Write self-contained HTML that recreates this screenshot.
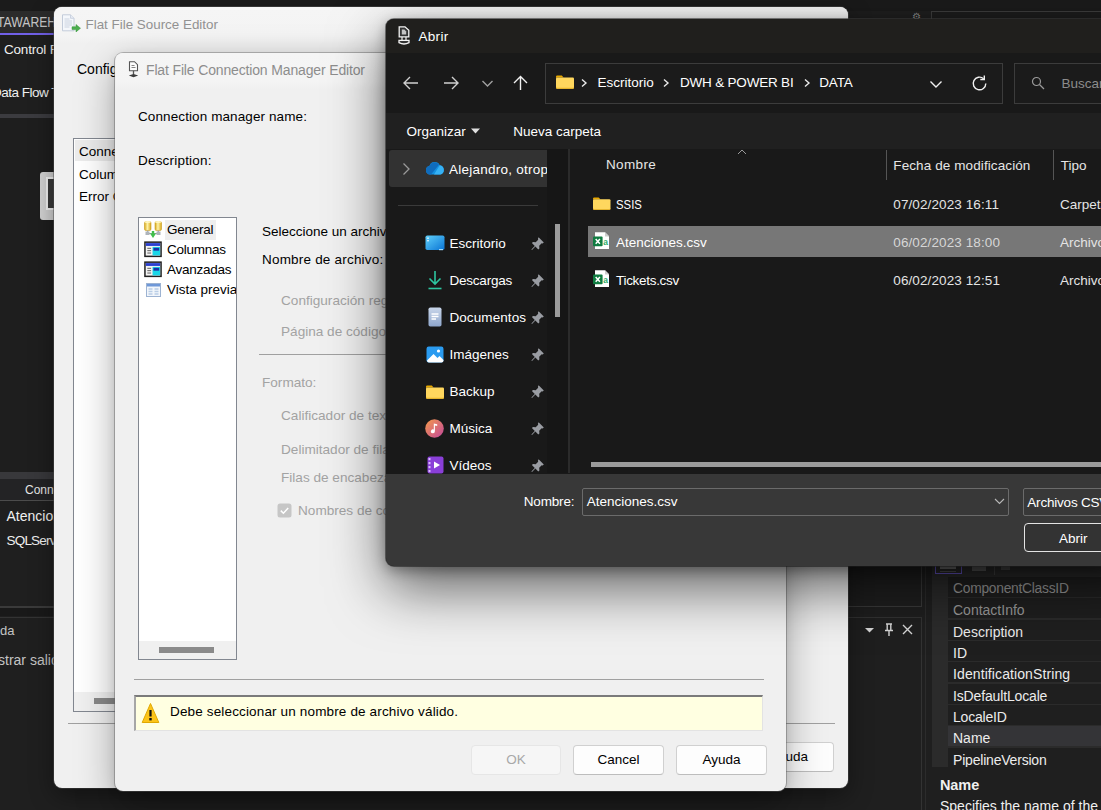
<!DOCTYPE html>
<html lang="es">
<head>
<meta charset="utf-8">
<title>Abrir</title>
<style>
*{box-sizing:border-box;margin:0;padding:0}
html,body{width:1101px;height:810px;overflow:hidden;background:#1f1f1f}
body{position:relative;font-family:"Liberation Sans",sans-serif;font-size:13px;color:#000}
.a{position:absolute;white-space:nowrap}
.t{position:absolute;white-space:nowrap;line-height:16px;height:16px}
/* ---------- VS background ---------- */
#vs{left:0;top:0;width:1101px;height:810px;background:#1f1f1f;overflow:hidden}
.w{color:#f0f0f0}
/* ---------- light dialogs ---------- */
.dlg{background:#f0f0f0;border-radius:8px;overflow:hidden}
#src{left:54px;top:7px;width:794px;height:781px;box-shadow:0 8px 24px rgba(0,0,0,.4),0 0 0 1px rgba(90,90,90,.5)}
#cm{left:115px;top:53px;width:671px;height:738px;box-shadow:0 14px 38px rgba(0,0,0,.34),0 2px 10px rgba(0,0,0,.1),0 0 0 1px rgba(120,120,120,.45)}
.g{color:#8b8b8b}
.d{color:#a3a3a3}
.btn{position:absolute;height:30px;border:1px solid #d0d0d0;border-bottom-color:#bdbdbd;border-radius:4px;background:#fdfdfd;text-align:center;line-height:28px;font-size:13.5px;color:#000}
/* ---------- Abrir dialog ---------- */
#ab{left:386px;top:19px;width:760px;height:547px;background:#191919;border-radius:8px;overflow:hidden;box-shadow:0 22px 56px rgba(0,0,0,.6),0 4px 14px rgba(0,0,0,.35),0 0 0 1px rgba(70,70,70,.6);color:#fff}
#ab .t{color:#fff}
</style>
</head>
<body>
<div id="vs" class="a">
 <!-- top strip -->
 <div class="a" style="left:0;top:0;width:1101px;height:11px;background:#1b1b1b"></div>
 <div class="a" style="left:0;top:11px;width:60px;height:22px;background:#2b2b2b"></div>
 <div class="t" style="left:-3px;top:13.500px;font-size:14.500px;color:#c6c6c6;transform:scaleX(.84);transform-origin:0 50%">TAWAREHOUSE</div>
 <div class="a" style="left:0;top:33px;width:60px;height:2px;background:#7160e8"></div>
 <div class="t w" style="left:4px;top:42px;font-size:13.500px;letter-spacing:-.2px">Control F</div>
 <div class="t w" style="left:-8px;top:85px;font-size:13.500px;letter-spacing:-.5px">Data Flow Task</div>
 <div class="a" style="left:0;top:114px;width:60px;height:4px;background:#3b3b3f"></div>
 <div class="a" style="left:0;top:118px;width:60px;height:354px;background:#1e1e1e"></div>
 <!-- node -->
 <div class="a" style="left:40px;top:172px;width:30px;height:48px;background:#d2d2d2;border-radius:3px"></div>
 <div class="a" style="left:46px;top:177px;width:30px;height:33px;background:#f4f4f4"></div>
 <div class="a" style="left:48px;top:179px;width:30px;height:29px;background:#3a3a3a"></div>
 <!-- connection managers -->
 <div class="a" style="left:0;top:472px;width:60px;height:7px;background:#38383b"></div>
 <div class="a" style="left:0;top:479px;width:60px;height:21px;background:#232325"></div>
 <div class="t" style="left:25px;top:482px;font-size:12px;color:#e6e6e6">Connection Managers</div>
 <div class="a" style="left:0;top:500px;width:60px;height:1px;background:#4c4c4c"></div>
 <div class="t w" style="left:6.500px;top:508px;font-size:14px;letter-spacing:0">Atenciones</div>
 <div class="t w" style="left:6.500px;top:533px;font-size:13.500px;letter-spacing:-.8px">SQLServer</div>
 <div class="a" style="left:0;top:606px;width:60px;height:2px;background:#3a3a3a"></div>
 <div class="a" style="left:0;top:608px;width:60px;height:8px;background:#191919"></div>
 <div class="a" style="left:0;top:617px;width:60px;height:1px;background:#333"></div>
 <div class="t" style="left:0;top:623px;font-size:13px;color:#c4c4c4">da</div>
 <div class="t" style="left:-2px;top:652px;font-size:14px;color:#c4c4c4">strar salida</div>
 <!-- right side -->
 <div class="a" style="left:912px;top:12px;font-size:10px;color:#888;line-height:10px">&#9881;</div>
 <div class="a" style="left:931px;top:11px;width:180px;height:30px;border:1px solid #3d3d3d;background:#1c1c1c"></div>
 <div class="a" style="left:840px;top:560px;width:82px;height:47px;border:1px solid #3a3a3a;border-left:0;border-top:0"></div>
 <div class="a" style="left:840px;top:617px;width:82px;height:200px;border:1px solid #333;border-left:0"></div>
 <div class="a" style="left:925px;top:560px;width:1px;height:250px;background:#2c2c2c"></div>
 <svg class="a" style="left:864px;top:622px" width="52" height="16" viewBox="0 0 52 16">
  <path d="M1 6h9l-4.5 4.5z" fill="#d8d8d8"/>
  <path d="M22 2h6M23.2 2v6M26.8 2v6M21 8.5h8M25 8.5v5.5" stroke="#d8d8d8" stroke-width="1.4" fill="none"/>
  <path d="M39 3l9 9M48 3l-9 9" stroke="#d8d8d8" stroke-width="1.4" fill="none"/>
 </svg>
 <div class="a" style="left:932px;top:560px;width:180px;height:207px;background:#2b2b2b"></div>
 <div class="a" style="left:935px;top:556px;width:27px;height:18px;border:1px solid #6a5acd"></div>
 <div class="a" style="left:940px;top:566px;width:16px;height:3px;background:#777"></div><div class="a" style="left:940px;top:571px;width:16px;height:1px;background:#555"></div><div class="a" style="left:972px;top:566px;width:14px;height:5px;background:#5a5a5a"></div><div class="a" style="left:994px;top:566px;width:1px;height:9px;background:#444"></div><div class="a" style="left:1001px;top:566px;width:9px;height:4px;background:#4a4a4a"></div>
 <div class="a" id="pg" style="left:948px;top:577px;width:160px;height:190px">
<div class="a" style="left:0;top:0px;width:160px;height:20px;background:#1f1f1f"></div><div class="t" style="left:5px;top:4px;font-size:13.800px;color:#9a9a9a;letter-spacing:-.25px">ComponentClassID</div>
<div class="a" style="left:0;top:21px;width:160px;height:20px;background:#1f1f1f"></div><div class="t" style="left:5px;top:25px;font-size:14px;color:#9a9a9a;letter-spacing:0px">ContactInfo</div>
<div class="a" style="left:0;top:43px;width:160px;height:20px;background:#1f1f1f"></div><div class="t" style="left:5px;top:47px;font-size:14px;color:#ececec;letter-spacing:0px">Description</div>
<div class="a" style="left:0;top:64px;width:160px;height:20px;background:#1f1f1f"></div><div class="t" style="left:5px;top:68px;font-size:14px;color:#ececec;letter-spacing:0px">ID</div>
<div class="a" style="left:0;top:85px;width:160px;height:20px;background:#1f1f1f"></div><div class="t" style="left:5px;top:89px;font-size:14px;color:#ececec;letter-spacing:.1px">IdentificationString</div>
<div class="a" style="left:0;top:107px;width:160px;height:20px;background:#1f1f1f"></div><div class="t" style="left:5px;top:111px;font-size:14px;color:#ececec;letter-spacing:-.15px">IsDefaultLocale</div>
<div class="a" style="left:0;top:128px;width:160px;height:20px;background:#1f1f1f"></div><div class="t" style="left:5px;top:132px;font-size:14px;color:#ececec;letter-spacing:-.2px">LocaleID</div>
<div class="a" style="left:0;top:149px;width:160px;height:20px;background:#343437"></div><div class="t" style="left:5px;top:153px;font-size:14px;color:#ececec;letter-spacing:0px">Name</div>
<div class="a" style="left:0;top:171px;width:160px;height:20px;background:#1f1f1f"></div><div class="t" style="left:5px;top:175px;font-size:14px;color:#ececec;letter-spacing:-.2px">PipelineVersion</div>
</div>
 <div class="a" style="left:932px;top:767px;width:180px;height:50px;background:#1f1f1f"></div>
 <div class="t w" style="left:940px;top:777px;font-size:14.500px;font-weight:bold;letter-spacing:-.1px">Name</div>
 <div class="t w" style="left:940px;top:797.500px;font-size:14px;letter-spacing:0">Specifies the name of the object.</div>
</div>
<div id="src" class="a dlg">
 <div class="a" style="left:0;top:0;width:794px;height:36px;background:linear-gradient(#f5f5f5 0,#f4f4f4 80%,#f0f0f0 100%)"></div>
 <svg class="a" style="left:7px;top:7px" width="20" height="20" viewBox="0 0 20 20">
  <path d="M1.500 .8h8l3.500 3.500v12.500h-11.500z" fill="#f4f7fb" stroke="#c3ccda" stroke-width="1"/>
  <path d="M9.500 .8v3.500h3.500" fill="#e6ebf3" stroke="#c3ccda" stroke-width=".8"/>
  <path d="M3.500 5h5M3.500 7h7.500M3.500 9h7.500M3.500 11h7.500M3.500 13h5" stroke="#cbd3e0" stroke-width="1"/>
  <path d="M11 12.800h4v-2.300l4.500 3.700-4.500 3.700v-2.300h-4z" fill="#4cae4f" stroke="#3a943f" stroke-width=".5"/>
 </svg>
 <div class="t" style="left:31.500px;top:10px;font-size:13.400px;color:#929292">Flat File Source Editor</div>
 <div class="t" style="left:23px;top:54px;font-size:14px">Configure</div>
 <div class="a" style="left:19px;top:131px;width:120px;height:574px;border:1px solid #828790;background:#fff"></div>
 <div class="a" style="left:21px;top:133px;width:80px;height:21px;background:#ececec"></div>
 <div class="t" style="left:25px;top:137px;font-size:13.500px">Connection</div>
 <div class="t" style="left:25px;top:159.500px;font-size:13.500px">Columns</div>
 <div class="t" style="left:25px;top:181.500px;font-size:13.500px">Error Output</div>
 <div class="a" style="left:20px;top:685px;width:118px;height:19px;background:#f0f0f0"></div>
 <div class="a" style="left:40px;top:691px;width:60px;height:6px;background:#8a8a8a"></div>
 <div class="a" style="left:14px;top:716px;width:767px;height:1px;background:#a0a0a0"></div>
 <div class="btn" style="left:690px;top:735px;width:90px">Ayuda</div>
</div>
<div id="cm" class="a dlg">
<div class="a" style="left:1px;top:0;width:670px;height:738px">
 <div class="a" style="left:0;top:0;width:670px;height:36px;background:linear-gradient(#f5f5f5 0,#f4f4f4 80%,#f0f0f0 100%)"></div>
 <svg class="a" style="left:12px;top:7.500px" width="11" height="17" viewBox="0 0 11 17">
  <path d="M1.500 .7h5l3 3v6h-8z" fill="#fdfdfd" stroke="#555" stroke-width="1.100"/>
  <path d="M3.500 4.500h3M3.500 6.500h4" stroke="#777" stroke-width=".9"/>
  <path d="M5.500 9.700v4" stroke="#555" stroke-width="1.300"/>
  <path d="M.8 14.600l4.700-1.700 4.700 1.700-4.700 1.700z" fill="#3c3c3c"/>
 </svg>
 <div class="t" style="left:30px;top:8.500px;font-size:14px;color:#8d8d8d;letter-spacing:-.15px">Flat File Connection Manager Editor</div>
 <div class="t" style="left:22px;top:56px;font-size:13.500px;letter-spacing:.1px">Connection manager name:</div>
 <div class="t" style="left:22px;top:100px;font-size:13.500px;letter-spacing:.2px">Description:</div>
 <div class="a" style="left:22px;top:164px;width:99px;height:443px;border:1px solid #828790;background:#fff;overflow:hidden" id="cml">
<div class="a" style="left:26px;top:2px;width:51px;height:20px;background:#eeeeee"></div>
<svg class="a" style="left:4px;top:2px" width="20" height="19" viewBox="0 0 20 19">
 <defs><linearGradient id="cy" x1="0" y1="0" x2="1" y2="0"><stop offset="0" stop-color="#d9a91a"/><stop offset=".45" stop-color="#fff3a8"/><stop offset="1" stop-color="#d9a91a"/></linearGradient></defs>
 <rect x="1.500" y="1.500" width="6.500" height="9" rx="1.500" fill="url(#cy)" stroke="#c79a1e" stroke-width=".6"/>
 <rect x="12" y="1.500" width="6.500" height="9" rx="1.500" fill="url(#cy)" stroke="#c79a1e" stroke-width=".6"/>
 <ellipse cx="4.750" cy="2" rx="3.200" ry="1.100" fill="#fff6bf"/><ellipse cx="15.250" cy="2" rx="3.200" ry="1.100" fill="#fff6bf"/>
 <path d="M4.700 10.500v3h10.600v-3" fill="none" stroke="#9aa0a6" stroke-width="1.200"/>
 <rect x="2.500" y="11.500" width="4" height="3.500" fill="#aeb4ba"/><rect x="13.500" y="11.500" width="4" height="3.500" fill="#aeb4ba"/>
 <path d="M7 13.500h6l-3 4.500z" fill="#3fbf4a"/><rect x="8.800" y="11" width="2.400" height="3" fill="#3fbf4a"/>
</svg>
<svg class="a" style="left:4.500px;top:23px" width="18" height="16.500" viewBox="0 0 19 17">
 <rect x="1" y="1" width="17" height="15" fill="#f4f4f4" stroke="#222" stroke-width="1.600"/><rect x="2" y="2" width="15" height="3" fill="#2a3fd0"/>
 <rect x="9" y="6" width="8" height="9" fill="#19d6e8"/><rect x="10" y="7" width="6" height="3" fill="#1b2fa8"/><path d="M3.500 7.500h4M3.500 10h4M3.500 12.500h4" stroke="#555" stroke-width="1"/>
</svg>
<svg class="a" style="left:4.500px;top:43px" width="18" height="16.500" viewBox="0 0 19 17">
 <rect x="1" y="1" width="17" height="15" fill="#f4f4f4" stroke="#222" stroke-width="1.600"/><rect x="2" y="2" width="15" height="3" fill="#2a3fd0"/>
 <rect x="9" y="6" width="8" height="9" fill="#19d6e8"/><rect x="10" y="7" width="6" height="3" fill="#1b2fa8"/><path d="M3.500 7.500h4M3.500 10h4M3.500 12.500h4" stroke="#555" stroke-width="1"/>
</svg>
<svg class="a" style="left:6.500px;top:65px" width="15" height="14" viewBox="0 0 15 14">
 <rect x=".5" y=".5" width="14" height="13" fill="#f2f6fb" stroke="#9db3d2" stroke-width="1"/><rect x="1" y="1" width="13" height="2.500" fill="#6f98d8"/>
 <path d="M2.500 6h4M2.500 8.500h4M2.500 11h4M8.500 6h4M8.500 8.500h4M8.500 11h4" stroke="#b9cde6" stroke-width="1.500"/>
</svg>
<div class="t" style="left:28px;top:4px;font-size:13.500px;letter-spacing:-.25px">General</div>
<div class="t" style="left:28px;top:24px;font-size:13.500px;letter-spacing:-.25px">Columnas</div>
<div class="t" style="left:28px;top:44px;font-size:13.500px;letter-spacing:-.25px">Avanzadas</div>
<div class="t" style="left:28px;top:64px;font-size:13.500px;letter-spacing:0">Vista previa</div>
<div class="a" style="left:0;top:423px;width:97px;height:18px;background:#f0f0f0"></div><div class="a" style="left:20px;top:429px;width:55px;height:6px;background:#8a8a8a"></div></div>
 <div class="t" style="left:146px;top:170.500px;font-size:13.500px">Seleccione un archivo y especifique</div>
 <div class="t" style="left:146px;top:198.500px;font-size:13.500px;letter-spacing:.2px">Nombre de archivo:</div>
 <div class="t d" style="left:165px;top:240px;font-size:13.600px">Configuración regional:</div>
 <div class="t d" style="left:165px;top:271px;font-size:13.600px">Página de códigos:</div>
 <div class="a" style="left:143px;top:301px;width:520px;height:1px;background:#a0a0a0"></div>
 <div class="t d" style="left:146px;top:322px;font-size:13.600px">Formato:</div>
 <div class="t d" style="left:165px;top:355px;font-size:13.600px">Calificador de texto:</div>
 <div class="t d" style="left:165px;top:389px;font-size:13.600px">Delimitador de filas de encabezado:</div>
 <div class="t d" style="left:165px;top:417px;font-size:13.600px">Filas de encabezado para omitir:</div>
 <svg class="a" style="left:161px;top:450px" width="15" height="15" viewBox="0 0 15 15"><rect x=".5" y=".5" width="14" height="14" rx="2.500" fill="#c6c6c6"/><path d="M3.800 7.600l2.600 2.600 4.800-5.200" stroke="#fff" stroke-width="1.500" fill="none"/></svg>
 <div class="t d" style="left:182px;top:450px;font-size:13.600px">Nombres de columnas en la primera</div>
 <div class="a" style="left:18px;top:626px;width:630px;height:1px;background:#a0a0a0"></div>
 <div class="a" style="left:18px;top:642px;width:629px;height:36px;background:#ffffe1;border:1px solid #e3e3e3;border-top:2px solid #7a7a7a;border-left:2px solid #a6a6a6"></div>
 <svg class="a" style="left:25px;top:649px" width="19" height="23" viewBox="0 0 19 23">
  <path d="M9.500 1.500L17.800 20.500H1.200z" fill="#fcc419" stroke="#e0a800" stroke-width="1" stroke-linejoin="round"/>
  <path d="M9.500 8v6.500" stroke="#111" stroke-width="2.200"/><rect x="8.300" y="16" width="2.400" height="2.400" fill="#111"/>
 </svg>
 <div class="t" style="left:54px;top:651px;font-size:13.500px;letter-spacing:.15px">Debe seleccionar un nombre de archivo válido.</div>
 <div class="btn" style="left:355px;top:692px;width:90px;color:#a8a8a8;background:#f6f6f6;border-color:#e6e6e6">OK</div>
 <div class="btn" style="left:457px;top:692px;width:91px">Cancel</div>
 <div class="btn" style="left:560px;top:692px;width:91px">Ayuda</div>
</div>
</div>
<div id="ab" class="a">
<div class="a" style="left:-386px;top:-19px;width:1200px;height:810px">
<div class="a" style="left:386px;top:19px;width:800px;height:34px;background:#201f1d"></div>
<div class="a" style="left:386px;top:113px;width:800px;height:36px;background:#202020"></div>
<div class="a" style="left:386px;top:474px;width:800px;height:100px;background:#383838"></div>
<svg class="a" style="left:398px;top:26px" width="12" height="19" viewBox="0 0 12 19">
 <path d="M1.200 .8h5.800l3.800 3.600v6.400H1.200z" fill="#333" stroke="#f4f4f4" stroke-width="1.300"/>
 <path d="M3.800 3.600h2.600l1.800 1.800v3H3.800z" fill="#c4c4c4"/>
 <path d="M4 11v3.200M8 11v3.200" stroke="#f4f4f4" stroke-width="1.200"/>
 <path d="M1 14.400h10v2.200q-5 2.800-10 0z" fill="#333" stroke="#f4f4f4" stroke-width="1.300"/>
</svg>
<div class="t" style="left:418.5px;top:28.9px;font-size:13.5px;color:#fff;letter-spacing:.3px;">Abrir</div>
<svg class="a" style="left:400px;top:73px" width="135" height="20" viewBox="0 0 135 20">
 <path d="M18 10H4M10 4l-6 6 6 6" stroke="#cfcfcf" stroke-width="1.400" fill="none"/>
 <path d="M44 10h14M52 4l6 6-6 6" stroke="#cfcfcf" stroke-width="1.400" fill="none"/>
 <path d="M82.500 8l5 5 5-5" stroke="#a0a0a0" stroke-width="1.400" fill="none"/>
 <path d="M120.500 17V3.500M114 10l6.500-6.500L127 10" stroke="#f0f0f0" stroke-width="1.400" fill="none"/>
</svg>
<div class="a" style="left:545px;top:63px;width:458px;height:41px;border:1px solid #3c3c3c;background:#1b1b1b"></div>
<svg class="a" style="left:556px;top:75px" width="18" height="14" viewBox="0 0 18 14">
 <path d="M0 1.800Q0 .6 1.200 .6h4.600l1.800 1.900H1.200Q0 2.500 0 3.700z" fill="#e8a800"/>
 <path d="M0 3.600Q0 2.400 1.200 2.400h15.600Q18 2.400 18 3.600v9q0 1.200-1.200 1.200H1.200Q0 13.800 0 12.600z" fill="#ffd75e"/>
 <path d="M0 12.600q0 1.200 1.200 1.200h15.600q1.200 0 1.200-1.200v-1q0 1.200-1.200 1.200H1.200Q0 12.800 0 11.600z" fill="#f0b824"/>
</svg>
<svg class="a" style="left:580px;top:78px" width="8" height="10" viewBox="0 0 8 10"><path d="M2 1.500l4 3.500-4 3.500" stroke="#e8e8e8" stroke-width="1.400" fill="none"/></svg>
<svg class="a" style="left:662px;top:78px" width="8" height="10" viewBox="0 0 8 10"><path d="M2 1.500l4 3.500-4 3.500" stroke="#e8e8e8" stroke-width="1.400" fill="none"/></svg>
<svg class="a" style="left:802.500px;top:78px" width="8" height="10" viewBox="0 0 8 10"><path d="M2 1.500l4 3.500-4 3.500" stroke="#e8e8e8" stroke-width="1.400" fill="none"/></svg>
<div class="t" style="left:597.4px;top:75.1px;font-size:13.5px;color:#fff;">Escritorio</div>
<div class="t" style="left:680px;top:75.1px;font-size:13.5px;color:#fff;letter-spacing:-.2px;">DWH &amp; POWER BI</div>
<div class="t" style="left:819.3px;top:75.1px;font-size:13.5px;color:#fff;letter-spacing:-.2px;">DATA</div>
<svg class="a" style="left:928px;top:76px" width="16" height="16" viewBox="0 0 16 16"><path d="M2.500 5.500l5.500 5.500 5.500-5.500" stroke="#f0f0f0" stroke-width="1.400" fill="none"/></svg>
<svg class="a" style="left:970px;top:74px" width="19" height="19" viewBox="0 0 19 19"><path d="M15.800 9.500a6.300 6.300 0 1 1-2.200-4.800" stroke="#f0f0f0" stroke-width="1.400" fill="none"/><path d="M14.300 1.500v4h-4" stroke="#f0f0f0" stroke-width="1.400" fill="none"/></svg>
<div class="a" style="left:1014px;top:63px;width:200px;height:41px;border:1px solid #3c3c3c;background:#1b1b1b"></div>
<svg class="a" style="left:1031px;top:76px" width="14" height="14" viewBox="0 0 14 14"><circle cx="5.500" cy="5.500" r="4" stroke="#9a9a9a" stroke-width="1.200" fill="none"/><path d="M8.500 8.500l4.500 4.500" stroke="#9a9a9a" stroke-width="1.200"/></svg>
<div class="t" style="left:1061.5px;top:75.5px;font-size:13.5px;color:#8c8c8c;">Buscar en DATA</div>
<div class="t" style="left:406.4px;top:124.1px;font-size:13.5px;color:#fff;">Organizar</div>
<svg class="a" style="left:471px;top:128px" width="9" height="6" viewBox="0 0 9 6"><path d="M0 .5h9l-4.500 5z" fill="#e0e0e0"/></svg>
<div class="t" style="left:513.3px;top:124.1px;font-size:13.5px;color:#fff;">Nueva carpeta</div>
<div class="a" style="left:547px;top:149px;width:21px;height:324px;background:#161616"></div>
<div class="a" style="left:568px;top:149px;width:2px;height:324px;background:#2b2b2b"></div>
<div class="a" style="left:389px;top:150px;width:158px;height:37px;background:#323232;border-radius:3px 0 0 3px"></div>
<svg class="a" style="left:401px;top:162px" width="10" height="14" viewBox="0 0 10 14"><path d="M2.500 1.500l5.500 5.500-5.500 5.500" stroke="#9a9a9a" stroke-width="1.300" fill="none"/></svg>
<svg class="a" style="left:425px;top:161px" width="20" height="14" viewBox="0 0 20 14">
 <path d="M5 13.500a4.300 4.300 0 0 1-.6-8.500A5.600 5.600 0 0 1 14.800 4.300 4.700 4.700 0 0 1 15.300 13.500z" fill="#1490df"/>
 <path d="M5 13.500a4.300 4.300 0 0 1-.6-8.500A5.600 5.600 0 0 1 9.500 1.300c2 0 3.500 1 4.500 2.400L6 13.500z" fill="#0f6cbd"/>
 <path d="M9 13.500L14.800 4.300a4.700 4.700 0 0 1 .5 9.200z" fill="#35b1f5"/>
</svg>
<div class="a" style="left:449px;top:150px;width:98px;height:37px;overflow:hidden"><div class="t" style="left:0;top:11.500px;font-size:13.500px;color:#fff;letter-spacing:.25px">Alejandro, otropersonal</div></div>
<div class="a" style="left:398px;top:205px;width:140px;height:1px;background:#3a3a3a"></div>
<div class="a" style="left:555px;top:224px;width:5px;height:93px;background:#9b9b9b"></div>
<div class="t" style="left:449.4px;top:235.5px;font-size:13.5px;color:#fff;">Escritorio</div>
<svg class="a" style="left:531px;top:235.5px" width="14" height="15" viewBox="0 0 14 15"><path d="M7.600 1.200l5.200 5.200-1.100 1.100-1-.3-2.500 2.500.2 2.700-1.100 1.100-2.900-2.900-3.400 3.400-.6-.6 3.400-3.400-2.900-2.900 1.100-1.100 2.700.2 2.500-2.500-.3-1z" fill="#9a9da3"/></svg>
<div class="t" style="left:449.4px;top:272.5px;font-size:13.5px;color:#fff;letter-spacing:-.2px;">Descargas</div>
<svg class="a" style="left:531px;top:272.5px" width="14" height="15" viewBox="0 0 14 15"><path d="M7.600 1.200l5.200 5.200-1.100 1.100-1-.3-2.500 2.500.2 2.700-1.100 1.100-2.900-2.900-3.400 3.400-.6-.6 3.400-3.400-2.900-2.900 1.100-1.100 2.700.2 2.500-2.500-.3-1z" fill="#9a9da3"/></svg>
<div class="t" style="left:449.4px;top:310.0px;font-size:13.5px;color:#fff;letter-spacing:.1px;">Documentos</div>
<svg class="a" style="left:531px;top:310.0px" width="14" height="15" viewBox="0 0 14 15"><path d="M7.600 1.200l5.200 5.200-1.100 1.100-1-.3-2.500 2.500.2 2.700-1.100 1.100-2.900-2.900-3.400 3.400-.6-.6 3.400-3.400-2.900-2.900 1.100-1.100 2.700.2 2.500-2.500-.3-1z" fill="#9a9da3"/></svg>
<div class="t" style="left:449.4px;top:347.0px;font-size:13.5px;color:#fff;">Imágenes</div>
<svg class="a" style="left:531px;top:347.0px" width="14" height="15" viewBox="0 0 14 15"><path d="M7.600 1.200l5.200 5.200-1.100 1.100-1-.3-2.500 2.500.2 2.700-1.100 1.100-2.900-2.900-3.400 3.400-.6-.6 3.400-3.400-2.900-2.900 1.100-1.100 2.700.2 2.500-2.500-.3-1z" fill="#9a9da3"/></svg>
<div class="t" style="left:449.4px;top:384.2px;font-size:13.5px;color:#fff;">Backup</div>
<svg class="a" style="left:531px;top:384.2px" width="14" height="15" viewBox="0 0 14 15"><path d="M7.600 1.200l5.200 5.200-1.100 1.100-1-.3-2.500 2.500.2 2.700-1.100 1.100-2.900-2.900-3.400 3.400-.6-.6 3.400-3.400-2.900-2.900 1.100-1.100 2.700.2 2.500-2.500-.3-1z" fill="#9a9da3"/></svg>
<div class="t" style="left:449.4px;top:421.2px;font-size:13.5px;color:#fff;">Música</div>
<svg class="a" style="left:531px;top:421.2px" width="14" height="15" viewBox="0 0 14 15"><path d="M7.600 1.200l5.200 5.200-1.100 1.100-1-.3-2.500 2.500.2 2.700-1.100 1.100-2.900-2.900-3.400 3.400-.6-.6 3.400-3.400-2.900-2.900 1.100-1.100 2.700.2 2.500-2.500-.3-1z" fill="#9a9da3"/></svg>
<div class="t" style="left:449.4px;top:458.2px;font-size:13.5px;color:#fff;">Vídeos</div>
<svg class="a" style="left:531px;top:458.2px" width="14" height="15" viewBox="0 0 14 15"><path d="M7.600 1.200l5.200 5.200-1.100 1.100-1-.3-2.500 2.500.2 2.700-1.100 1.100-2.900-2.900-3.400 3.400-.6-.6 3.400-3.400-2.900-2.900 1.100-1.100 2.700.2 2.500-2.500-.3-1z" fill="#9a9da3"/></svg>
<svg class="a" style="left:425px;top:235px" width="20" height="16" viewBox="0 0 20 16"><defs><linearGradient id="gd" x1="0" y1="0" x2="1" y2="1"><stop offset="0" stop-color="#5fd0fb"/><stop offset="1" stop-color="#0a74d4"/></linearGradient></defs><rect x=".5" y=".5" width="19" height="14.500" rx="1.800" fill="url(#gd)"/><rect x="2.300" y="2.500" width="1.400" height="1.400" fill="#fff"/><rect x="2.300" y="5" width="1.400" height="1.400" fill="#fff"/><rect x="14" y="14" width="4" height="1.200" fill="#9fdcff"/></svg>
<svg class="a" style="left:427px;top:270px" width="16" height="20" viewBox="0 0 16 20"><path d="M8 1v12.500M2.500 8.500L8 14l5.500-5.500" stroke="#2dc6a0" stroke-width="1.600" fill="none"/><path d="M1.500 18.500h13" stroke="#2dc6a0" stroke-width="1.600"/></svg>
<svg class="a" style="left:428px;top:307px" width="14" height="20" viewBox="0 0 14 20"><defs><linearGradient id="gdo" x1="0" y1="0" x2="0" y2="1"><stop offset="0" stop-color="#c9d6ea"/><stop offset="1" stop-color="#8ea6cc"/></linearGradient></defs><rect x=".5" y=".5" width="13" height="19" rx="1.800" fill="url(#gdo)"/><path d="M3.500 7h7M3.500 9.500h7M3.500 12h4.500" stroke="#fff" stroke-width="1.300"/></svg>
<svg class="a" style="left:426px;top:346px" width="18" height="17" viewBox="0 0 18 17"><rect x=".5" y=".5" width="17" height="16" rx="2.200" fill="#2a9bf0"/><path d="M1 14.500L7.500 8l4 4 2-2 4 4v.5a2 2 0 0 1-2 2h-12.500a2 2 0 0 1-2-2z" fill="#fff"/><circle cx="12.500" cy="5" r="1.600" fill="#fff"/></svg>
<svg class="a" style="left:426px;top:384.5px" width="18" height="14" viewBox="0 0 18 14">
 <path d="M0 1.800Q0 .6 1.200 .6h4.600l1.800 1.900H1.200Q0 2.500 0 3.700z" fill="#e8a800"/>
 <path d="M0 3.600Q0 2.400 1.200 2.400h15.600Q18 2.400 18 3.600v9q0 1.200-1.200 1.200H1.200Q0 13.800 0 12.600z" fill="#ffd75e"/>
 <path d="M0 12.600q0 1.200 1.200 1.200h15.600q1.200 0 1.200-1.200v-1q0 1.200-1.200 1.200H1.200Q0 12.800 0 11.600z" fill="#f0b824"/>
</svg>
<svg class="a" style="left:425px;top:419px" width="19" height="19" viewBox="0 0 19 19"><defs><linearGradient id="gm" x1="0" y1="0" x2="1" y2="1"><stop offset="0" stop-color="#f59a4a"/><stop offset="1" stop-color="#c2479b"/></linearGradient></defs><circle cx="9.500" cy="9.500" r="9.300" fill="url(#gm)"/><path d="M8.800 4.500l3.400.8v1.700l-2.300-.5v5.800a2 2 0 1 1-1.100-1.800z" fill="#fff"/></svg>
<svg class="a" style="left:427px;top:456px" width="17" height="18" viewBox="0 0 17 18"><rect x=".5" y=".5" width="16" height="17" rx="2" fill="#8a3fd8"/><rect x="1.500" y="2" width="2" height="2.200" fill="#d9b8ff"/><rect x="1.500" y="6" width="2" height="2.200" fill="#d9b8ff"/><rect x="1.500" y="10" width="2" height="2.200" fill="#d9b8ff"/><rect x="1.500" y="14" width="2" height="2.200" fill="#d9b8ff"/><path d="M7 5.500l6 3.500-6 3.500z" fill="#fff"/></svg>
<svg class="a" style="left:737px;top:149px" width="10" height="6" viewBox="0 0 10 6"><path d="M1 5l4-4 4 4" stroke="#9a9a9a" stroke-width="1" fill="none"/></svg>
<div class="t" style="left:606px;top:157.3px;font-size:13.5px;color:#e6e6e6;letter-spacing:.35px;">Nombre</div>
<div class="a" style="left:886px;top:150px;width:1px;height:30px;background:#555"></div><div class="a" style="left:1053px;top:150px;width:1px;height:30px;background:#555"></div>
<div class="t" style="left:893.3px;top:158.3px;font-size:13.5px;color:#e6e6e6;letter-spacing:.1px;">Fecha de modificación</div>
<div class="t" style="left:1060.7px;top:158.3px;font-size:13.5px;color:#e6e6e6;">Tipo</div>
<div class="a" style="left:588px;top:226px;width:600px;height:31px;background:#777"></div>
<svg class="a" style="left:593px;top:196.500px" width="17.500" height="13" viewBox="0 0 18 14" preserveAspectRatio="none">
 <path d="M0 1.800Q0 .6 1.200 .6h4.600l1.800 1.900H1.200Q0 2.500 0 3.700z" fill="#e8a800"/>
 <path d="M0 3.600Q0 2.400 1.200 2.400h15.600Q18 2.400 18 3.600v9q0 1.200-1.200 1.200H1.200Q0 13.800 0 12.600z" fill="#ffd75e"/>
 <path d="M0 12.600q0 1.200 1.200 1.200h15.600q1.200 0 1.200-1.200v-1q0 1.200-1.200 1.200H1.200Q0 12.800 0 11.600z" fill="#f0b824"/>
</svg>
<div class="t" style="left:616px;top:196.8px;font-size:13.5px;color:#fff;transform:scaleX(.84);transform-origin:0 50%;">SSIS</div>
<div class="t" style="left:893.3px;top:196.8px;font-size:13.5px;color:#e4e4e4;letter-spacing:.1px;">07/02/2023 16:11</div>
<div class="t" style="left:1060px;top:196.8px;font-size:13.5px;color:#e4e4e4;">Carpeta de archivos</div>
<svg class="a" style="left:592.500px;top:231.5px" width="16.500" height="17.500" viewBox="0 0 16.500 17.500"><path d="M2 .3h10l4.200 4.200v12.700H2z" fill="#fff"/><path d="M12 .3v4.200h4.200z" fill="#cdcdcd"/><rect x="0" y="4.600" width="9.600" height="9.600" rx="1" fill="#107c41"/><path d="M2.700 7l4.200 4.800M6.900 7l-4.200 4.800" stroke="#fff" stroke-width="1.500"/><text x="10.300" y="12.600" font-family="Liberation Sans, sans-serif" font-size="8.500" font-weight="bold" fill="#2fae6a">a</text></svg>
<div class="t" style="left:616px;top:234.9px;font-size:13.5px;color:#fff;">Atenciones.csv</div>
<div class="t" style="left:893.3px;top:234.9px;font-size:13.5px;color:#d6d6d6;letter-spacing:.1px;">06/02/2023 18:00</div>
<div class="t" style="left:1060px;top:234.9px;font-size:13.5px;color:#e4e4e4;">Archivo de valores</div>
<svg class="a" style="left:592.500px;top:269.5px" width="16.500" height="17.500" viewBox="0 0 16.500 17.500"><path d="M2 .3h10l4.200 4.200v12.700H2z" fill="#fff"/><path d="M12 .3v4.200h4.200z" fill="#cdcdcd"/><rect x="0" y="4.600" width="9.600" height="9.600" rx="1" fill="#107c41"/><path d="M2.700 7l4.200 4.800M6.900 7l-4.200 4.800" stroke="#fff" stroke-width="1.500"/><text x="10.300" y="12.600" font-family="Liberation Sans, sans-serif" font-size="8.500" font-weight="bold" fill="#2fae6a">a</text></svg>
<div class="t" style="left:616px;top:272.8px;font-size:13.5px;color:#fff;letter-spacing:-.3px;">Tickets.csv</div>
<div class="t" style="left:893.3px;top:273.1px;font-size:13.5px;color:#e4e4e4;letter-spacing:.1px;">06/02/2023 12:51</div>
<div class="t" style="left:1060px;top:273.1px;font-size:13.5px;color:#e4e4e4;">Archivo de valores</div>
<div class="a" style="left:591px;top:461.500px;width:600px;height:5.500px;background:#9b9b9b"></div>
<div class="t" style="left:523.7px;top:494.3px;font-size:13.5px;color:#fff;letter-spacing:-.15px;">Nombre:</div>
<div class="a" style="left:582px;top:488px;width:427px;height:27.500px;border:1px solid #6b6b6b;border-radius:2px;background:#383838"></div>
<div class="t" style="left:586.7px;top:494.3px;font-size:13.5px;color:#fff;">Atenciones.csv</div>
<svg class="a" style="left:994px;top:497px" width="11" height="9" viewBox="0 0 11 9"><path d="M1 2l4.500 4.500L10 2" stroke="#b8b8b8" stroke-width="1.100" fill="none"/></svg>
<div class="a" style="left:1023px;top:488px;width:200px;height:27.500px;border:1px solid #6b6b6b;border-radius:2px;background:#383838"></div>
<div class="t" style="left:1027.3px;top:494.8px;font-size:13.5px;color:#fff;letter-spacing:-.2px;">Archivos CSV (*.csv)</div>
<div class="a" style="left:1024px;top:523px;width:120px;height:28.500px;border:1px solid #e4e4e4;border-radius:4px;background:#333"></div>
<div class="t" style="left:1059px;top:530.8px;font-size:13.5px;color:#fff;">Abrir</div>
</div>
</div>
</body>
</html>
